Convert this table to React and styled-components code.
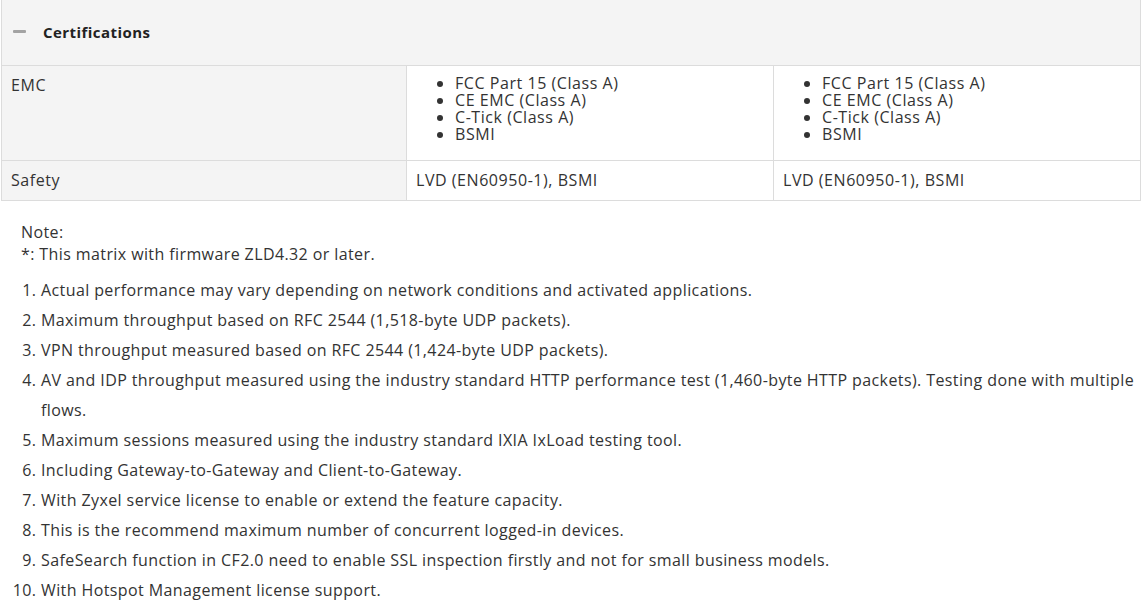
import React from "react";
import styled, { createGlobalStyle } from "styled-components";

const Global = createGlobalStyle`
  html, body { margin: 0; padding: 0; background: #fff; }
  body { font-family: "Open Sans", "Liberation Sans", sans-serif; color: #333; overflow: hidden; }
`;

const Page = styled.div`
  padding-left: 1px;
  width: 1141px;
`;

const Table = styled.table`
  border-collapse: collapse;
  table-layout: fixed;
  width: 1140px;
  margin-top: -9px;
  font-size: 16px;
  letter-spacing: 0.55px;
`;

const Cell = styled.td`
  border: 1px solid #dcdcdc;
  padding: ${(p) => (p.$list ? "9px 9px 17px" : "10px 9px")};
  vertical-align: top;
  line-height: 19px;
  background: ${(p) => (p.$label ? "#f4f4f4" : "#fff")};
  color: #333;
`;

const EdgeCell = styled.td`
  border-left: 1px solid #dcdcdc;
  border-right: 1px solid #dcdcdc;
  border-bottom: 1px solid #dcdcdc;
  height: 8px;
  padding: 0;
`;

const HeaderCell = styled.th`
  border: 1px solid #dcdcdc;
  background: #f4f4f4;
  height: 63px;
  padding: 0 0 2px 11px;
  text-align: left;
`;

const HeaderInner = styled.div`
  display: flex;
  align-items: center;
  gap: 17px;
`;

const Minus = styled.span`
  display: block;
  width: 13px;
  height: 3px;
  background: #a3a3a3;
  border-radius: 1px;
`;

const HeaderTitle = styled.span`
  font-size: 15px;
  font-weight: 700;
  letter-spacing: 0.45px;
  color: #222;
`;

const Bullets = styled.ul`
  margin: 0;
  padding-left: 39px;
  list-style: disc;
  line-height: 17px;
`;

const Notes = styled.div`
  padding: 20px 0 0 20px;
  font-size: 16px;
  letter-spacing: 0.4px;
  color: #333;
`;

const NoteLine = styled.div`
  line-height: 22px;
`;

const NumList = styled.ol`
  margin: 10px 0 0;
  padding-left: 20px;
  line-height: 30px;
`;

const emc = ["FCC Part 15 (Class A)", "CE EMC (Class A)", "C-Tick (Class A)", "BSMI"];

const notes = [
  "Actual performance may vary depending on network conditions and activated applications.",
  "Maximum throughput based on RFC 2544 (1,518-byte UDP packets).",
  "VPN throughput measured based on RFC 2544 (1,424-byte UDP packets).",
  "AV and IDP throughput measured using the industry standard HTTP performance test (1,460-byte HTTP packets). Testing done with multiple flows.",
  "Maximum sessions measured using the industry standard IXIA IxLoad testing tool.",
  "Including Gateway-to-Gateway and Client-to-Gateway.",
  "With Zyxel service license to enable or extend the feature capacity.",
  "This is the recommend maximum number of concurrent logged-in devices.",
  "SafeSearch function in CF2.0 need to enable SSL inspection firstly and not for small business models.",
  "With Hotspot Management license support.",
];

export default function App() {
  return (
    <Page>
      <Global />
      <Table>
        <colgroup>
          <col style={{ width: "405px" }} />
          <col style={{ width: "367px" }} />
          <col style={{ width: "367px" }} />
        </colgroup>
        <tbody>
          <tr>
            <EdgeCell />
            <EdgeCell />
            <EdgeCell />
          </tr>
          <tr>
            <HeaderCell colSpan={3}>
              <HeaderInner>
                <Minus />
                <HeaderTitle>Certifications</HeaderTitle>
              </HeaderInner>
            </HeaderCell>
          </tr>
          <tr>
            <Cell $label>EMC</Cell>
            <Cell $list>
              <Bullets>
                {emc.map((e) => (
                  <li key={e}>{e}</li>
                ))}
              </Bullets>
            </Cell>
            <Cell $list>
              <Bullets>
                {emc.map((e) => (
                  <li key={e}>{e}</li>
                ))}
              </Bullets>
            </Cell>
          </tr>
          <tr>
            <Cell $label>Safety</Cell>
            <Cell>LVD (EN60950-1), BSMI</Cell>
            <Cell>LVD (EN60950-1), BSMI</Cell>
          </tr>
        </tbody>
      </Table>
      <Notes>
        <NoteLine>Note:</NoteLine>
        <NoteLine>*: This matrix with firmware ZLD4.32 or later.</NoteLine>
        <NumList>
          {notes.map((n) => (
            <li key={n}>{n}</li>
          ))}
        </NumList>
      </Notes>
    </Page>
  );
}
